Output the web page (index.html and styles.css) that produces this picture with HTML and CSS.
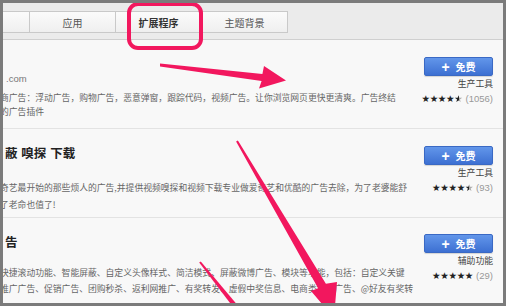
FILE: index.html
```html
<!DOCTYPE html>
<html lang="zh-CN">
<head>
<meta charset="utf-8">
<title>扩展程序</title>
<link rel="stylesheet" href="styles.css">
</head>
<body>
<div class="frame">
  <header class="topbar">
    <nav class="tabs">
      <div class="tab"></div>
      <div class="tab">应用</div>
      <div class="tab tab-active">扩展程序</div>
      <div class="tab">主题背景</div>
    </nav>
  </header>
  <main class="list">
    <section class="item item-1">
      <div class="info">
        <div class="title"></div>
        <div class="site">.com</div>
        <div class="desc">
          <span class="line">商广告：浮动广告，购物广告，恶意弹窗，跟踪代码，视频广告。让你浏览网页更快更清爽。广告终结</span>
          <span class="line">的广告插件</span>
        </div>
      </div>
      <div class="side">
        <button class="btn"><span class="plus">+</span><span>免费</span></button>
        <div class="cat">生产工具</div>
        <div class="rating"><span class="stars">★★★★<span class="half">★</span></span><span class="count">(1056)</span></div>
      </div>
    </section>
    <section class="item item-2">
      <div class="info">
        <div class="title">蔽 嗅探 下载</div>
        <div class="site"></div>
        <div class="desc">
          <span class="line">奇艺最开始的那些烦人的广告,并提供视频嗅探和视频下载专业做爱奇艺和优酷的广告去除，为了老婆能舒</span>
          <span class="line">了老命也值了!</span>
        </div>
      </div>
      <div class="side">
        <button class="btn"><span class="plus">+</span><span>免费</span></button>
        <div class="cat">生产工具</div>
        <div class="rating"><span class="stars">★★★★<span class="half">★</span></span><span class="count">(93)</span></div>
      </div>
    </section>
    <section class="item item-3">
      <div class="info">
        <div class="title">告</div>
        <div class="site"></div>
        <div class="desc">
          <span class="line">快捷滚动功能、智能屏蔽、自定义头像样式、简洁模式、屏蔽微博广告、模块等功能，包括：自定义关键</span>
          <span class="line">推广广告、促销广告、团购秒杀、返利网推广、有奖转发、虚假中奖信息、电商类推广广告、@好友有奖转</span>
        </div>
      </div>
      <div class="side">
        <button class="btn"><span class="plus">+</span><span>免费</span></button>
        <div class="cat">辅助功能</div>
        <div class="rating"><span class="stars">★★★★★</span><span class="count">(29)</span></div>
      </div>
    </section>
  </main>
  <svg class="marks" width="500" height="300" viewBox="3 3 500 300" aria-hidden="true">
    <rect x="129" y="4" width="72" height="44" rx="9" ry="9" fill="none" stroke="#f2175e" stroke-width="4"/>
    <polygon fill="#f2175e" points="160,63.5 262.4,74 264,66 286,80.4 259,88.5 261.6,81 160,66.5"/>
    <polygon fill="#f2175e" points="237.9,140.5 325.9,283.7 337,282 334,318 311,291 318.1,288.3 236.1,141.5"/>
    <polygon fill="#f2175e" points="200.8,261.4 241.9,310.4 238.1,313.6 199.2,262.6"/>
  </svg>
</div>
</body>
</html>
```

FILE: styles.css
```css
html, body {
  margin: 0;
  padding: 0;
}

body {
  width: 506px;
  height: 306px;
  overflow: hidden;
  background: #7b7b7b;
}

.frame {
  position: relative;
  margin: 3px 0 0 3px;
  width: 500px;
  height: 300px;
  background: #f8f8f8;
  overflow: hidden;
  font-family: "Noto Sans CJK SC", "Liberation Sans", sans-serif;
}

.topbar {
  height: 37px;
  box-sizing: border-box;
  padding-top: 8px;
  background: #ebebeb;
  border-bottom: 1px solid #cfcfcf;
}

.tabs {
  display: flex;
  margin-left: -60px;
}

.tab {
  width: 87px;
  height: 22px;
  box-sizing: border-box;
  margin-left: -1px;
  border: 1px solid #c9c9c9;
  background: linear-gradient(#fbfbfb, #efefef);
  display: flex;
  align-items: center;
  justify-content: center;
  font-size: 10px;
  color: #555;
}

.tab:first-child {
  margin-left: 0;
}

.tab-active {
  font-weight: bold;
  color: #333;
}

.list {
  display: flex;
  flex-direction: column;
}

.item {
  display: flex;
  height: 89px;
  box-sizing: border-box;
  border-bottom: 1px solid #e3e3e3;
}

.info {
  flex: 1;
  min-width: 0;
  margin-left: -3px;
  padding-top: 16px;
  white-space: nowrap;
}

.title {
  height: 16px;
  line-height: 16px;
  margin-left: 5px;
  font-size: 12.5px;
  font-weight: bold;
  color: #222;
  word-spacing: 1px;
}

.site {
  height: 14px;
  line-height: 14px;
  margin-left: 6px;
  font-family: "Liberation Sans", "Noto Sans CJK SC", sans-serif;
  font-size: 9.5px;
  color: #777;
}

.desc {
  margin-top: 5px;
  font-size: 8.8px;
  line-height: 14px;
  color: #666;
}

.item-2 .desc {
  margin-top: 4px;
  line-height: 17px;
}

.item-3 .desc {
  margin-top: 1px;
  line-height: 16px;
}

.line {
  display: block;
}

.side {
  width: 69px;
  margin-right: 10px;
  padding-top: 17px;
  display: flex;
  flex-direction: column;
  align-items: flex-end;
}

.item-3 .side {
  padding-top: 16px;
}

.btn {
  width: 69px;
  height: 19px;
  box-sizing: border-box;
  margin: 0;
  padding: 0;
  border: 1px solid #3a69c4;
  border-radius: 2px;
  background: linear-gradient(#6296ea, #3d70d2);
  color: #fff;
  display: flex;
  align-items: center;
  justify-content: center;
  gap: 6px;
  font-family: "Noto Sans CJK SC", sans-serif;
  font-size: 10px;
  font-weight: bold;
  box-shadow: 0 1px 1px rgba(0, 0, 0, 0.15);
}

.plus {
  font-family: "Liberation Sans", sans-serif;
  font-size: 14px;
  line-height: 14px;
  font-weight: bold;
}

.cat {
  margin-top: 1px;
  line-height: 14px;
  font-size: 8.8px;
  color: #444;
}

.rating {
  margin-top: 1px;
  line-height: 14px;
  white-space: nowrap;
  display: flex;
  align-items: baseline;
  gap: 3px;
}

.stars {
  font-family: "DejaVu Sans", sans-serif;
  font-size: 9.5px;
  color: #222;
  letter-spacing: -0.3px;
}

.half {
  background: linear-gradient(90deg, #222 55%, #aaa 55%);
  -webkit-background-clip: text;
  background-clip: text;
  color: transparent;
}

.count {
  font-family: "Liberation Sans", sans-serif;
  font-size: 9.5px;
  color: #999;
}

.marks {
  position: absolute;
  top: 0;
  left: 0;
  pointer-events: none;
}
```
